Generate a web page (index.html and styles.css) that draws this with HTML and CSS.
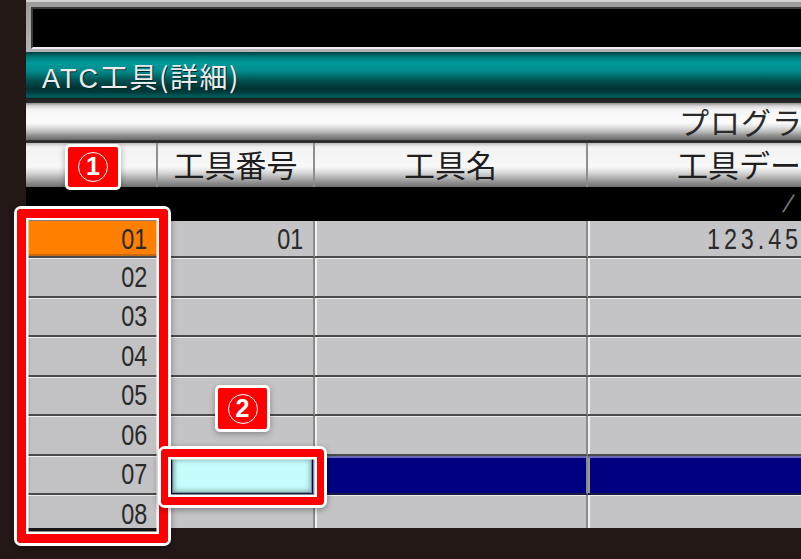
FILE: index.html
```html
<!DOCTYPE html>
<html lang="ja">
<head>
<meta charset="utf-8">
<title>ATC工具(詳細)</title>
<link rel="stylesheet" href="styles.css">
</head>
<body>
<div class="screen">
  <div class="strip"></div>
  <div class="panel">
    <div class="topframe"><div class="blackbox"></div></div>
    <div class="titlebar"><span class="title"><span class="latin">ATC</span>工具(詳細)</span></div>
    <div class="progbar"><span class="progtext">プログラム</span></div>
    <div class="header">
      <div class="hcell"></div>
      <div class="hcell">工具番号</div>
      <div class="hcell">工具名</div>
      <div class="hcell last">工具データ</div>
    </div>
    <div class="subband"><span class="slash">/</span></div>
    <div class="rows">
      <div class="row">
        <div class="cell idx sel"><span class="num">01</span></div>
        <div class="cell c2"><span class="num">01</span></div>
        <div class="cell c3"></div>
        <div class="cell c4"><span class="num wide">123.45</span></div>
      </div>
      <div class="row">
        <div class="cell idx"><span class="num">02</span></div>
        <div class="cell c2"></div>
        <div class="cell c3"></div>
        <div class="cell c4"></div>
      </div>
      <div class="row">
        <div class="cell idx"><span class="num">03</span></div>
        <div class="cell c2"></div>
        <div class="cell c3"></div>
        <div class="cell c4"></div>
      </div>
      <div class="row">
        <div class="cell idx"><span class="num">04</span></div>
        <div class="cell c2"></div>
        <div class="cell c3"></div>
        <div class="cell c4"></div>
      </div>
      <div class="row">
        <div class="cell idx"><span class="num">05</span></div>
        <div class="cell c2"></div>
        <div class="cell c3"></div>
        <div class="cell c4"></div>
      </div>
      <div class="row">
        <div class="cell idx"><span class="num">06</span></div>
        <div class="cell c2"></div>
        <div class="cell c3"></div>
        <div class="cell c4"></div>
      </div>
      <div class="row active">
        <div class="cell idx"><span class="num">07</span></div>
        <div class="cell c2 navy"><div class="cursor"></div></div>
        <div class="cell c3 navy"></div>
        <div class="cell c4 navy"></div>
      </div>
      <div class="row">
        <div class="cell idx"><span class="num">08</span></div>
        <div class="cell c2"></div>
        <div class="cell c3"></div>
        <div class="cell c4"></div>
      </div>
    </div>
    <div class="rowsfoot"></div>
  </div>
</div>

<div class="callout callout-1"></div>
<div class="callout callout-2"></div>
<div class="badge badge-1"><span class="circ">1</span></div>
<div class="badge badge-2"><span class="circ">2</span></div>
</body>
</html>
```

FILE: styles.css
```css
html, body {
  margin: 0;
  padding: 0;
}
body {
  width: 801px;
  height: 559px;
  overflow: hidden;
  position: relative;
  background: #231815;
  font-family: "Noto Sans CJK JP", "Liberation Sans", sans-serif;
}
.screen {
  display: flex;
  width: 801px;
  height: 559px;
}
.strip {
  width: 26px;
  flex: none;
  background: #231815;
}
.panel {
  flex: 1;
  min-width: 0;
  overflow: hidden;
  background: #231815;
  display: flex;
  flex-direction: column;
}

/* top black frame */
.topframe {
  height: 52px;
  box-sizing: border-box;
  flex: none;
  border-top: 2px solid #d2d2d2;
  background: linear-gradient(to bottom, #9c9c9c, #b4b4b4);
  padding: 5px 0 3px 5px;
}
.blackbox {
  height: 42px;
  box-sizing: border-box;
  background: #000;
  border-top: 2px solid #3a3a3a;
  border-left: 2px solid #3a3a3a;
  border-bottom: 2px solid #ededed;
}

/* teal title */
.titlebar {
  height: 51px;
  flex: none;
  box-sizing: border-box;
  background: linear-gradient(to bottom,
    #004040 0px, #007a7a 5px, #009a9a 11px, #008c8c 19px,
    #005454 28px, #003434 36px, #003a3a 40px, #005a5a 44px, #005050 46px,
    #1c1c1c 46px, #2c2c2c 51px);
  display: flex;
  align-items: flex-start;
  padding-left: 16px;
  padding-top: 7px;
}
.title {
  color: #ececec;
  font-size: 28px;
  line-height: 34px;
  white-space: nowrap;
  text-shadow: 1px 1px 0 #002a2a;
  letter-spacing: 1.5px;
}
.title .latin {
  font-family: "Liberation Sans", sans-serif;
  font-size: 27px;
  letter-spacing: 2px;
}

/* program bar */
.progbar {
  height: 37px;
  flex: none;
  box-sizing: border-box;
  background: linear-gradient(to bottom,
    #8e8e8e 0px, #d8d8d8 3px, #f6f6f6 7px, #fbfbfb 20px,
    #e2e2e2 24px, #b8b8b8 29px, #8a8a8a 33px, #6a6a6a 37px);
  display: flex;
  align-items: center;
  padding-left: 653px;
  white-space: nowrap;
}
.progtext {
  font-size: 30px;
  line-height: 37px;
  color: #2a2a2a;
  letter-spacing: 1px;
}

/* column header */
.header {
  flex: none;
  height: 47px;
  box-sizing: border-box;
  border-top: 3px solid #2e2e2e;
  background: linear-gradient(to bottom,
    #bdbdbd 0px, #f2f2f2 4px, #f8f8f8 24px,
    #d6d6d6 30px, #a8a8a8 36px, #6e6e6e 44px);
  display: grid;
  grid-template-columns: 132px 157px 273px 333px;
}
.hcell {
  box-sizing: border-box;
  border-right: 2px solid #8e8e8e;
  font-size: 31px;
  line-height: 42px;
  color: #1e1e1e;
  text-align: center;
  white-space: nowrap;
}
.hcell.last {
  border-right: none;
}

/* black band */
.subband {
  flex: none;
  height: 34px;
  background: #000;
  display: flex;
  align-items: center;
  padding-left: 759px;
  white-space: nowrap;
}
.slash {
  font-family: "Liberation Sans", sans-serif;
  font-size: 24px;
  color: #7a7a7a;
  line-height: 24px;
  transform: skewX(-20deg);
  display: inline-block;
}

/* rows */
.rows {
  flex: none;
  height: 307px;
  overflow: hidden;
  display: grid;
  grid-template-rows: 37px repeat(7, 39.5px);
}
.row {
  display: grid;
  grid-template-columns: 131px 158px 273px 333px;
}
.cell {
  box-sizing: border-box;
  background: #c4c3c6;
  border-bottom: 2px solid #4a4a4a;
  box-shadow: inset 0 1px 0 #ececec;
  display: flex;
  align-items: center;
  justify-content: flex-end;
  overflow: hidden;
}
.row:first-child .cell {
  box-shadow: none;
}
.cell.idx {
  padding-right: 10px;
  background: #c2c1c4;
  box-shadow: inset 0 1px 0 #ececec, inset 4px 0 0 #b0b0b0;
}
.cell.idx.sel {
  background: #ff8000;
  box-shadow: inset 0 -2px 0 #c96a10;
}
.cell.c2 {
  border-right: 2px solid #8a8a8a;
  padding-right: 10px;
}
.cell.c3 {
  border-right: 2px solid #8a8a8a;
  box-shadow: inset 0 1px 0 #ececec, inset 2px 0 0 #efefef;
}
.cell.c4 {
  justify-content: flex-start;
  padding-left: 119px;
  box-shadow: inset 0 1px 0 #ececec, inset 2px 0 0 #efefef;
}
.row:first-child .cell.c3,
.row:first-child .cell.c4 {
  box-shadow: inset 2px 0 0 #efefef;
}
.cell.navy {
  background: #000080;
  box-shadow: inset 0 2px 0 #6a6ab4;
  border-bottom-color: #1a1a40;
}
.cell.c3.navy, .cell.c4.navy {
  box-shadow: inset 0 2px 0 #6a6ab4, inset 2px 0 0 #9a9a9a;
}
.cell.c2.navy {
  padding: 2px 1px 0 15px;
  align-items: stretch;
}
.cursor {
  flex: 1;
  background: #c6fcfc;
  border: 1px solid #6f8f8f;
  box-shadow: inset 0 0 5px 1px #86a8a8;
}
.num {
  display: inline-block;
  font-family: "Liberation Sans", sans-serif;
  font-size: 30px;
  line-height: 30px;
  color: #2a2a2a;
  transform: scaleX(0.78);
  transform-origin: right center;
  white-space: nowrap;
}
.num.wide {
  transform-origin: left center;
  letter-spacing: 5px;
}
.rowsfoot {
  flex: none;
  width: 131px;
  height: 4px;
  background: #151515;
}

/* annotations */
.callout {
  position: absolute;
  box-sizing: border-box;
  border: 9px solid #ff0000;
  border-radius: 4px;
  box-shadow: 0 0 0 3px #ffffff, inset 0 0 0 2.5px #ffffff, 0 2px 6px 3px rgba(0,0,0,0.35);
}
.callout-1 {
  left: 17px;
  top: 209px;
  width: 151px;
  height: 334px;
}
.callout-2 {
  left: 161px;
  top: 449px;
  width: 163px;
  height: 56px;
  border-width: 8px 7px;
  border-radius: 4px;
}
.badge {
  position: absolute;
  background: #ff0000;
  border-radius: 2px;
  box-shadow: 0 0 0 3px #ffffff, 0 2px 6px 3px rgba(0,0,0,0.3);
  display: flex;
  align-items: center;
  justify-content: center;
}
.badge-1 {
  left: 68px;
  top: 147px;
  width: 50px;
  height: 40px;
}
.badge-2 {
  left: 218px;
  top: 388px;
  width: 49px;
  height: 41px;
}
.circ {
  width: 30px;
  height: 30px;
  box-sizing: border-box;
  border: 1.6px solid #ffffff;
  border-radius: 50%;
  color: #ffffff;
  font-family: "Liberation Sans", sans-serif;
  font-weight: bold;
  font-size: 25px;
  line-height: 27px;
  text-align: center;
}
```
